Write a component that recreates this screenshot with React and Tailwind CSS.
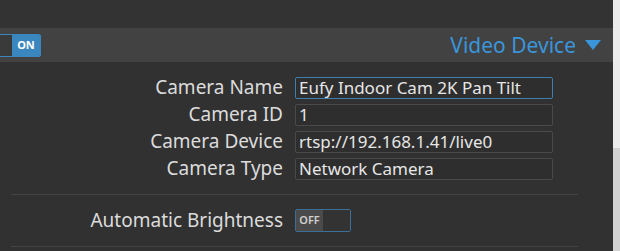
import React from "react";

const font = { fontFamily: '"Noto Sans", "Open Sans", sans-serif' };

function Field({ label, value, active }) {
  return (
    <div className="flex items-center h-[27px]">
      <div className="w-[283px] text-right text-[19px] text-[#dcdcdc] leading-none whitespace-nowrap">{label}</div>
      <div className="w-[12px]" />
      <div
        className={`w-[258px] h-[22px] rounded-[2px] border flex items-center pl-[3px] text-[17px] text-[#e6e6e6] leading-none bg-[#2e2e2e] whitespace-nowrap overflow-hidden ${
          active ? "border-[#3f7fae]" : "border-[#4a4a4a]"
        }`}
      >
        {value}
      </div>
    </div>
  );
}

export default function App() {
  return (
    <div className="w-[620px] h-[251px] flex bg-[#313131] overflow-hidden" style={font}>
      <div className="w-[613px] flex flex-col bg-[#313131]">
        <div className="h-[28px] bg-[#333333]" />
        <div className="h-[34px] bg-[#424242] flex items-center justify-between">
          <div className="flex h-[23px] ml-[-1px] rounded-[2px] border border-[#3a87c0] overflow-hidden">
            <div className="w-[12px] bg-[#3a3a3a]" />
            <div className="w-[28px] bg-[#3a87c0] flex items-center justify-center text-white text-[11px] font-bold">ON</div>
          </div>
          <div className="flex items-center mr-[12px]">
            <span className="text-[21px] text-[#3a95da] leading-none">Video Device</span>
            <svg width="16" height="10" viewBox="0 0 16 10" className="ml-[9px]">
              <polygon points="0,0 16,0 8,10" fill="#3a95da" />
            </svg>
          </div>
        </div>
        <div className="pt-[12px] flex flex-col">
          <Field label="Camera Name" value="Eufy Indoor Cam 2K Pan Tilt" active />
          <Field label="Camera ID" value="1" />
          <Field label="Camera Device" value="rtsp://192.168.1.41/live0" />
          <Field label="Camera Type" value="Network Camera" />
        </div>
        <div className="mt-[12px] ml-[11px] w-[567px] h-[1px] bg-[#444444]" />
        <div className="flex items-center h-[51px]">
          <div className="w-[283px] text-right text-[19px] text-[#dcdcdc] leading-none whitespace-nowrap">Automatic Brightness</div>
          <div className="w-[12px]" />
          <div className="flex h-[23px] w-[56px] rounded-[2px] border border-[#3b6f98] overflow-hidden">
            <div className="w-[27px] bg-[#4a4a4a] flex items-center justify-center text-[#cfcfcf] text-[11px] font-semibold">OFF</div>
            <div className="flex-1 bg-[#333333]" />
          </div>
        </div>
        <div className="ml-[11px] w-[567px] h-[1px] bg-[#444444]" />
      </div>
      <div className="flex-1 flex flex-col">
        <div className="h-[148px] bg-[#ececec]" />
        <div className="flex-1 bg-[#d2d2d2]" />
      </div>
    </div>
  );
}
